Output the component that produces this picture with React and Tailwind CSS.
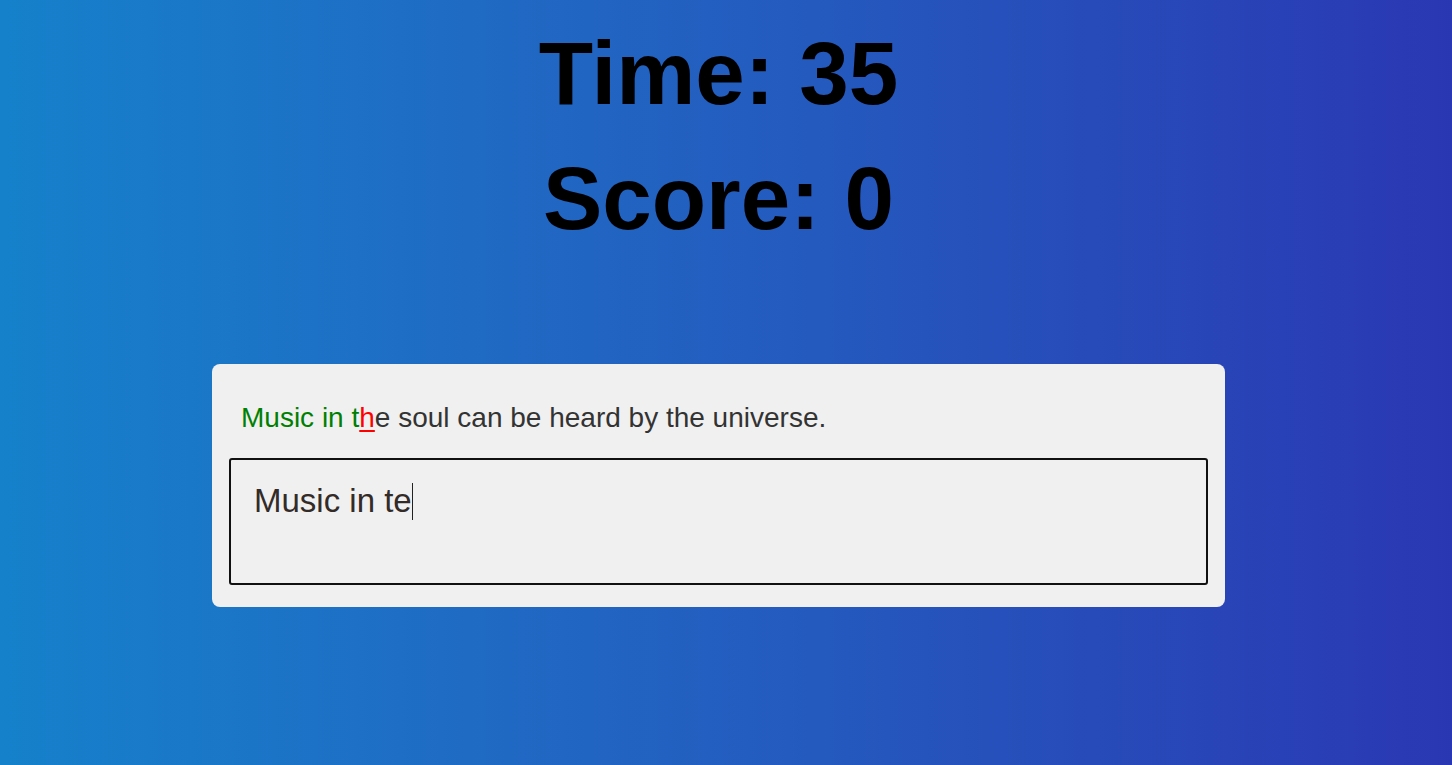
export default function App() {
  return (
    <div
      className="min-h-[765px] w-full bg-gradient-to-r from-[#1581cb] to-[#2a37b3] pr-[15px] flex flex-col items-center"
      style={{ fontFamily: '"Liberation Sans", Arial, sans-serif' }}
    >
      <div className="pt-[11px] flex flex-col items-center text-black font-bold">
        <h1 className="text-[89px] leading-[125px]">Time: 35</h1>
        <h1 className="text-[89px] leading-[125px]">Score: 0</h1>
      </div>

      <div className="mt-[103px] w-[1013px] bg-[#f0f0f0] rounded-[8px] pt-[38px] pb-[22px] pl-[17px] pr-[17px]">
        <p className="pl-[12px] text-[28px] leading-[32px] text-[#333]">
          <span className="text-[#008000]">Music in t</span>
          <span className="text-[#ff0000] underline decoration-[2px] underline-offset-[3px]">h</span>
          e soul can be heard by the universe.
        </p>
        <div className="mt-[24px] h-[127px] border-2 border-[#111] rounded-[3px] px-[23px] pt-[22px]">
          <div className="text-[33px] leading-[38px] text-[#332b28] flex items-center">
            <span>Music in te</span>
            <span className="inline-block w-px h-[37px] bg-[#222]" />
          </div>
        </div>
      </div>
    </div>
  );
}
